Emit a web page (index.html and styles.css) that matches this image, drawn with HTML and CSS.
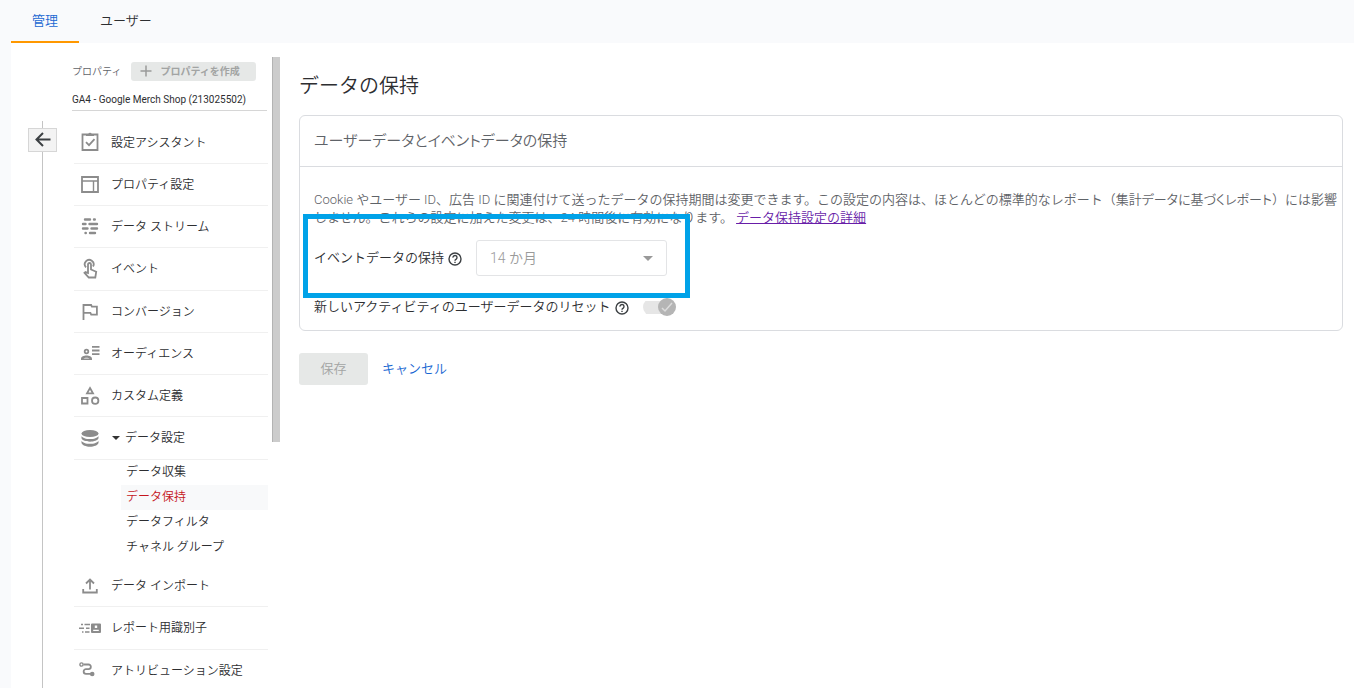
FILE: index.html
```html
<!DOCTYPE html>
<html lang="ja">
<head>
<meta charset="utf-8">
<meta name="viewport" content="width=device-width, initial-scale=1">
<title>データの保持</title>
<link rel="stylesheet" href="styles.css">
</head>
<body>
<header class="topbar">
  <nav class="tabs">
    <a class="tab tab-active" href="#admin">管理</a>
    <a class="tab" href="#user">ユーザー</a>
  </nav>
</header>
<div class="workspace">
  <div class="rail">
    <button class="back" type="button" aria-label="戻る">
      <svg width="16" height="16" viewBox="0 0 16 16" fill="none" stroke="#3c4043" stroke-width="2"><path d="M15.500 7.500H2M8 1L1.500 7.500L8 14"/></svg>
    </button>
  </div>
  <aside class="sidebar">
    <div class="property-head">
      <span class="property-label">プロパティ</span>
      <button class="create" type="button" disabled>
        <svg width="12" height="12" viewBox="0 0 12 12" stroke="#9a9b9b" stroke-width="1.500"><path d="M6 .5v11M.5 6h11"/></svg>
        プロパティを作成
      </button>
    </div>
    <a class="property-name" href="#property">GA4 - Google Merch Shop (213025502)</a>
    <ul class="menu">
      <li><a class="item" href="#assistant"><svg class="icon" viewBox="0 0 22 22"><path class="s" d="M3.500 3.500h15v15.500h-15zM7 11.200l3 3 5.500-6"/><path d="M7 3h2.300a1.800 1.800 0 0 1 3.400 0H15v2H7z"/></svg>設定アシスタント</a></li>
      <li><a class="item" href="#settings"><svg class="icon" viewBox="0 0 22 22"><path class="s" d="M3 4h16v15H3z"/><path class="t" d="M3 8h16M14.500 8v11"/></svg>プロパティ設定</a></li>
      <li><a class="item" href="#streams"><svg class="icon" viewBox="0 0 22 22"><path class="r" d="M6 4.500h5M15 4.500h.8M4 9h2.500M10.500 9H18M4 13.500h4.500M12.500 13.500H18M6.500 18h.3M11 18h5"/></svg>データ ストリーム</a></li>
      <li><a class="item item-tall" href="#events"><svg class="icon" viewBox="0 0 22 22"><path class="s" d="M7 9.300A4.400 4.400 0 1 1 14 8.500M9 14V6.500a1.500 1.500 0 0 1 3 0v5l5.200 2.300-.9 5.700H9.800l-4.300-4.600 1-.8L9 15z"/></svg>イベント</a></li>
      <li><a class="item" href="#conversions"><svg class="icon" viewBox="0 0 22 22"><path class="s" d="M4.500 20V5h7.600l.8 1.700h5v8h-5.700l-.8-1.800H4.500"/></svg>コンバージョン</a></li>
      <li><a class="item" href="#audiences"><svg class="icon" viewBox="0 0 22 22"><circle class="s" cx="7.500" cy="9.500" r="1.800"/><path d="M2 18v-1.300c0-2.300 3-3.300 5.500-3.300s5.500 1 5.500 3.300V18zm2.500-1.500h6c-.8-1.100-5.200-1.100-6 0z" fill-rule="evenodd"/><path class="s" d="M13 4.800h7.500M13 8.500h7.500M13 12.200h7.500"/></svg>オーディエンス</a></li>
      <li><a class="item" href="#custom"><svg class="icon" viewBox="0 0 22 22"><path class="s" d="M11 4L14 9.300H8zM3 14h5.500v5.500H3z"/><circle class="s" cx="16.200" cy="16.700" r="3.200"/></svg>カスタム定義</a></li>
      <li>
        <a class="item item-tall" href="#data"><svg class="icon" viewBox="0 0 22 22"><ellipse cx="11" cy="6.500" rx="8.500" ry="3.600"/><path d="M2.500 9c1 2 4.500 3.100 8.500 3.100S18.500 11 19.500 9v2.300c-.7 2-4.500 3.400-8.500 3.400s-7.800-1.400-8.500-3.400zM2.500 13.700c1 2 4.500 3.100 8.500 3.100s7.500-1.100 8.500-3.100V16c-.7 2.200-4.500 3.700-8.500 3.700S3.200 18.200 2.500 16z"/></svg><span class="caret"></span>データ設定</a>
        <ul class="submenu">
          <li><a class="subitem" href="#collection">データ収集</a></li>
          <li><a class="subitem subitem-active" href="#retention">データ保持</a></li>
          <li><a class="subitem" href="#filters">データフィルタ</a></li>
          <li><a class="subitem" href="#channels">チャネル グループ</a></li>
        </ul>
      </li>
      <li><a class="item" href="#import"><svg class="icon" viewBox="0 0 22 22"><path class="s" d="M11 15.500V6M7 9.500l4-4 4 4M4.200 15v3.500h13.600V15"/></svg>データ インポート</a></li>
      <li><a class="item item-tall" href="#identity"><svg class="icon" viewBox="0 0 22 22"><path class="t" d="M2 7.500h2M5.500 7.500h5.500M0 11.300h5M7 11.300h3.500M3 15h1.500M6 15h4.500"/><path fill-rule="evenodd" d="M13 6.500h8a1 1 0 0 1 1 1v7.500a1 1 0 0 1-1 1h-8a1 1 0 0 1-1-1V7.500a1 1 0 0 1 1-1zm2.800 2v2.500h2.400V8.500zm-1.600 5.500h5.600v-1.200h-5.600z"/></svg>レポート用識別子</a></li>
      <li><a class="item" href="#attribution"><svg class="icon" viewBox="0 0 22 22"><circle class="t" cx="2.500" cy="5.500" r="1.600"/><path class="s" d="M4.500 5.500h5a2.300 2.300 0 0 1 0 4.700H7a2.300 2.300 0 0 0 0 4.700h5"/><circle cx="13.200" cy="15" r="2.300"/></svg>アトリビューション設定</a></li>
    </ul>
  </aside>
  <div class="scroll"><div class="thumb"></div></div>
  <main class="content">
    <h1 class="title">データの保持</h1>
    <section class="card">
      <h2 class="card-title">ユーザーデータとイベントデータの保持</h2>
      <div class="card-body">
        <p class="note">Cookie やユーザー ID、広告 ID に関連付けて送ったデータの保持期間は変更できます。この設定の内容は、ほとんどの標準的なレポート（<span class="aside">集計データに基づくレポート</span>）には影響しません。これらの設定に加えた変更は、24 時間後に有効になります。 <a class="more" href="#details">データ保持設定の詳細</a></p>
        <div class="field">
          <label for="period">イベントデータの保持</label>
          <svg class="help" viewBox="0 0 14 14"><circle cx="7" cy="7" r="6"/><path d="M5 5.600a2 2 0 1 1 3.200 1.500C7.400 7.600 7 7.900 7 8.700M7 9.700v1.400"/></svg>
          <span class="select-wrap"><select id="period" class="period" disabled><option>14 か月</option></select><span class="arrow"></span></span>
        </div>
        <div class="field field-reset">
          <label for="reset">新しいアクティビティのユーザーデータのリセット</label>
          <svg class="help" viewBox="0 0 14 14"><circle cx="7" cy="7" r="6"/><path d="M5 5.600a2 2 0 1 1 3.200 1.500C7.400 7.600 7 7.900 7 8.700M7 9.700v1.400"/></svg>
          <span class="switch"><input id="reset" class="switch-input" type="checkbox" checked disabled><span class="knob"><svg width="14" height="14" viewBox="0 0 14 14" fill="none" stroke="#dcdcdc" stroke-width="1.500"><path d="M2 8l3 3 7-8"/></svg></span></span>
        </div>
      </div>
      <div class="highlight"></div>
    </section>
    <div class="actions">
      <button class="save" type="button" disabled>保存</button>
      <a class="cancel" href="#cancel">キャンセル</a>
    </div>
  </main>
</div>
</body>
</html>
```
FILE: styles.css
```css
* { box-sizing: border-box; }
body {
  margin: 0;
  height: 100vh;
  display: flex;
  flex-direction: column;
  overflow: hidden;
  background: #f9fafc;
  color: #2d2e31;
  font-family: Roboto, "Noto Sans CJK JP", sans-serif;
  font-size: 13px;
  font-weight: 350;
}
button, select { font: inherit; }
a { color: inherit; text-decoration: none; }
ul { margin: 0; padding: 0; list-style: none; }
svg { flex: none; }

.topbar { padding-left: 11px; }
.tabs { display: flex; }
.tab {
  padding: 0 21px;
  border-bottom: 2px solid transparent;
  line-height: 41px;
}
.tab-active { border-color: #ff9800; color: #1967d2; }

.workspace {
  flex: 1;
  min-height: 0;
  display: flex;
  margin-left: 11px;
  background: #fff;
}
.rail {
  width: 61px;
  margin-top: 78px;
  padding: 7px 0 0 17px;
  background: linear-gradient(#c4c4c4, #c4c4c4) 31px 0 / 1px 100% no-repeat;
}
.back {
  display: flex;
  align-items: center;
  justify-content: center;
  width: 29px;
  height: 24px;
  padding: 0;
  border: 1px solid #d6d6d6;
  background: #f3f3f3;
}

.sidebar { width: 196px; padding-top: 19px; }
.property-head { display: flex; align-items: center; gap: 10px; font-size: 10px; line-height: 19px; }
.property-label { color: #5f6368; }
.create {
  display: flex;
  align-items: center;
  gap: 8px;
  height: 19px;
  padding: 0 16px 1px 9px;
  border: 0;
  border-radius: 3px;
  background: #e6e8e7;
  color: #a2a4a3;
  font-weight: 700;
}
.property-name {
  display: block;
  margin-right: 1px;
  padding-top: 8px;
  border-bottom: 1px solid #d6d6d6;
  font-size: 10px;
  font-weight: 400;
  line-height: 21px;
}
.menu { margin: 11px 0 0 2px; font-size: 12px; }
.item {
  display: flex;
  align-items: center;
  height: 42px;
  padding: 0 0 3px 5px;
  border-bottom: 1px solid #f0f0f0;
}
.item-tall { height: 43px; }
.icon { width: 22px; height: 22px; margin: 2px 10px 0 0; fill: #8c8c8c; }
.icon .s { fill: none; stroke: #8c8c8c; stroke-width: 1.800; }
.icon .t { fill: none; stroke: #8c8c8c; stroke-width: 1.400; }
.icon .r { fill: none; stroke: #8c8c8c; stroke-width: 2.400; stroke-linecap: round; }
.caret {
  margin: 2px 5px 0 1px;
  border: 4px solid transparent;
  border-top: 4px solid #333;
  border-bottom: 0;
}
.submenu { padding: 0 0 5px 47px; }
.subitem { display: block; padding-left: 5px; line-height: 25px; }
.subitem-active { background: #f8f9fa; color: #c5161d; }

.scroll { width: 12px; padding: 14px 0 0 4px; }
.thumb { height: 61%; border-left: 1px solid #b3b3b3; background: #ccc; }

.content { flex: 1; min-width: 0; padding: 28px 11px 0 19px; }
.title { margin: 0; font-size: 20px; font-weight: 350; line-height: 30px; }
.card {
  position: relative;
  margin-top: 14px;
  border: 1px solid #dadce0;
  border-radius: 6px;
}
.card-title {
  margin: 0;
  padding: 0 14px;
  border-bottom: 1px solid #dadce0;
  color: #5f6368;
  font-size: 15px;
  font-weight: 350;
  line-height: 50px;
  font-feature-settings: "palt";
}
.card-body { padding: 24px 2px 12px 14px; }
.note { margin: 0; color: #5f6368; line-height: 18px; }
.aside { font-feature-settings: "palt"; }
.more { color: #681da8; text-decoration: underline; }
.field { display: flex; align-items: center; margin-top: 13px; line-height: 22px; }
.field-reset { margin-top: 20px; }
.help { width: 14px; height: 14px; margin: 2px 14px 0 4px; fill: none; stroke: #3c4043; stroke-width: 1.400; }
.select-wrap { position: relative; width: 191px; }
.period {
  appearance: none;
  width: 100%;
  height: 36px;
  padding: 0 13px;
  border: 1px solid #e3e4e6;
  border-radius: 3px;
  background: #fff;
  color: #9a9a9a;
  opacity: 1;
  font-size: 14px;
}
.arrow {
  position: absolute;
  top: 16px;
  right: 14px;
  border: 5px solid transparent;
  border-top-color: #999;
  border-bottom: 0;
}
.switch {
  position: relative;
  display: flex;
  justify-content: flex-end;
  align-items: center;
  width: 33px;
  height: 18px;
  background: linear-gradient(#e6e6e6, #e6e6e6) 0 50% / 30px 13px no-repeat;
  border-radius: 9px;
}
.switch-input { position: absolute; inset: 0; width: 100%; height: 100%; margin: 0; opacity: 0; }
.knob {
  display: flex;
  align-items: center;
  justify-content: center;
  width: 18px;
  height: 18px;
  border-radius: 50%;
  background: #b5b5b5;
}
.highlight {
  position: absolute;
  top: 98px;
  left: 3px;
  width: 387px;
  height: 84px;
  border: 5px solid #00a2e8;
  pointer-events: none;
}
.actions { display: flex; align-items: center; gap: 14px; margin-top: 22px; }
.save {
  min-width: 69px;
  height: 32px;
  padding: 0 21px 3px;
  border: 0;
  border-radius: 3px;
  background: #e6e8e7;
  color: #a2a4a3;
}
.cancel { padding-bottom: 3px; color: #1967d2; }
```
